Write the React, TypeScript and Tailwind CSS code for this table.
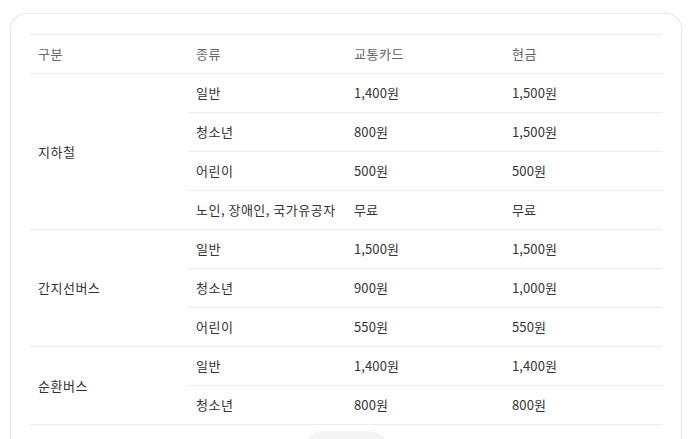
import React from 'react';

interface FareRow {
  kind: string;
  card: string;
  cash: string;
}

interface FareGroup {
  name: string;
  rows: FareRow[];
}

const groups: FareGroup[] = [
  {
    name: '지하철',
    rows: [
      { kind: '일반', card: '1,400원', cash: '1,500원' },
      { kind: '청소년', card: '800원', cash: '1,500원' },
      { kind: '어린이', card: '500원', cash: '500원' },
      { kind: '노인, 장애인, 국가유공자', card: '무료', cash: '무료' },
    ],
  },
  {
    name: '간지선버스',
    rows: [
      { kind: '일반', card: '1,500원', cash: '1,500원' },
      { kind: '청소년', card: '900원', cash: '1,000원' },
      { kind: '어린이', card: '550원', cash: '550원' },
    ],
  },
  {
    name: '순환버스',
    rows: [
      { kind: '일반', card: '1,400원', cash: '1,400원' },
      { kind: '청소년', card: '800원', cash: '800원' },
    ],
  },
];

const cell = 'h-[39px] px-2 text-left align-middle font-normal';
const line = 'border-b border-[#ececec]';

export default function App() {
  return (
    <div className="min-h-screen bg-white pl-[10px] pr-[16px] pt-[13px] font-['Noto_Sans_CJK_KR','Noto_Sans',sans-serif] text-[13px] tracking-[0.5px]">
      <div className="w-[672px] rounded-t-[16px] border border-b-0 border-[#e6e6e6] px-[19px] pt-[20px]">
        <table className="w-full table-fixed border-collapse">
          <thead>
            <tr className="border-y border-[#ececec] text-[#666]">
              <th className={cell}>구분</th>
              <th className={cell}>종류</th>
              <th className={cell}>교통카드</th>
              <th className={cell}>현금</th>
            </tr>
          </thead>
          <tbody className="text-[#333]">
            {groups.map((g) =>
              g.rows.map((r, i) => {
                const inner = i < g.rows.length - 1 ? line : '';
                return (
                  <tr key={g.name + r.kind} className={i === g.rows.length - 1 ? line : ''}>
                    {i === 0 && (
                      <td rowSpan={g.rows.length} className={cell}>
                        {g.name}
                      </td>
                    )}
                    <td className={`${cell} ${inner}`}>{r.kind}</td>
                    <td className={`${cell} ${inner} tracking-[0.1px]`}>{r.card}</td>
                    <td className={`${cell} ${inner} tracking-[0.1px]`}>{r.cash}</td>
                  </tr>
                );
              })
            )}
          </tbody>
        </table>
        <div className="mt-[6px] flex justify-center">
          <div className="h-[20px] w-[85px] rounded-t-full bg-[#f4f4f5]" />
        </div>
      </div>
    </div>
  );
}
